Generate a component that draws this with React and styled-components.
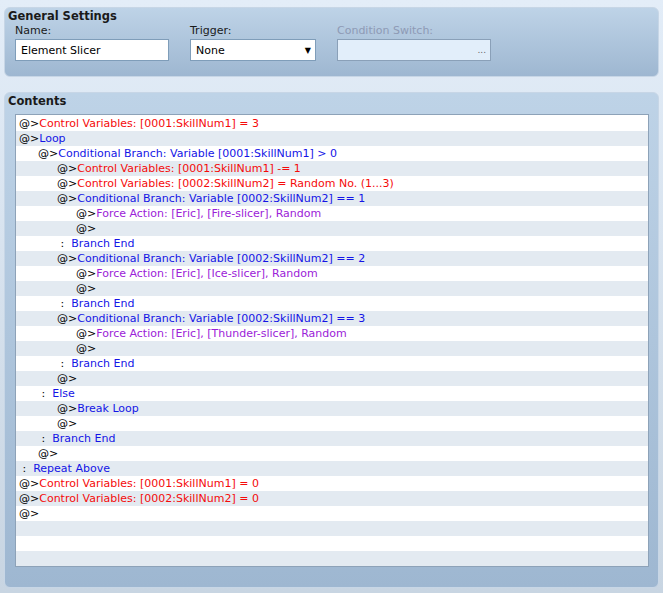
import React from "react";
import styled, { createGlobalStyle } from "styled-components";

const G = createGlobalStyle`
  body{margin:0;background:#dde8f4;font-family:"DejaVu Sans",Verdana,sans-serif;font-size:11px;}
`;
const Page = styled.div`width:663px;height:593px;padding:7px 4px 0 4px;box-sizing:border-box;display:flex;flex-direction:column;gap:15px;background:linear-gradient(#e3edf8,#c8d5e2);`;
const Panel = styled.div`border-radius:6px;background:linear-gradient(#bed3e7,#9eb7d1);border:1px solid #c7d6e6;display:flex;flex-direction:column;padding:1px 9px 0 3px;box-sizing:border-box;height:${p=>p.h}px;`;
const Title = styled.div`font-weight:bold;font-size:11.5px;color:#1a1a1a;height:15px;`;
const Fields = styled.div`display:flex;gap:21px;padding-left:7px;`;
const Field = styled.div`display:flex;flex-direction:column;gap:2px;color:${p=>p.dis?"#8e9ab5":"#1a1a1a"};`;
const Box = styled.div`width:${p=>p.w}px;height:22px;box-sizing:border-box;border:1px solid ${p=>p.dis?"#8aa0b8":"#7f9db9"};background:${p=>p.dis?"#e2eefa":"#fff"};display:flex;align-items:center;justify-content:space-between;padding:0 4px 0 5px;color:#000;font-size:11px;`;
const List = styled.div`margin:5px 0 0 7px;background:#fff;border:1px solid #8da2b8;height:453px;box-sizing:border-box;padding-top:1px;`;
const Row = styled.div`height:15px;line-height:15px;white-space:pre;padding-left:${p=>3+p.l*19}px;background:${p=>p.alt?"#e3eaf1":"#fff"};color:#000;`;
const C = styled.span`color:${p=>p.c};`;

const cols={r:"#f50a0a",b:"#1414e6",p:"#9b22d8"};
const rows=[
 [0,"@",">","r","Control Variables: [0001:SkillNum1] = 3"],
 [0,"@",">","b","Loop"],
 [1,"@",">","b","Conditional Branch: Variable [0001:SkillNum1] > 0"],
 [2,"@",">","r","Control Variables: [0001:SkillNum1] -= 1"],
 [2,"@",">","r","Control Variables: [0002:SkillNum2] = Random No. (1...3)"],
 [2,"@",">","b","Conditional Branch: Variable [0002:SkillNum2] == 1"],
 [3,"@",">","p","Force Action: [Eric], [Fire-slicer], Random"],
 [3,"@",">"],
 [2,":","b","Branch End"],
 [2,"@",">","b","Conditional Branch: Variable [0002:SkillNum2] == 2"],
 [3,"@",">","p","Force Action: [Eric], [Ice-slicer], Random"],
 [3,"@",">"],
 [2,":","b","Branch End"],
 [2,"@",">","b","Conditional Branch: Variable [0002:SkillNum2] == 3"],
 [3,"@",">","p","Force Action: [Eric], [Thunder-slicer], Random"],
 [3,"@",">"],
 [2,":","b","Branch End"],
 [2,"@",">"],
 [1,":","b","Else"],
 [2,"@",">","b","Break Loop"],
 [2,"@",">"],
 [1,":","b","Branch End"],
 [1,"@",">"],
 [0,":","b","Repeat Above"],
 [0,"@",">","r","Control Variables: [0001:SkillNum1] = 0"],
 [0,"@",">","r","Control Variables: [0002:SkillNum2] = 0"],
 [0,"@",">"],
 null,null,null
];

export default function App(){
  return <><G/><Page>
    <Panel h={70}>
      <Title>General Settings</Title>
      <Fields>
        <Field>Name:<Box w={154}>Element Slicer</Box></Field>
        <Field>Trigger:<Box w={126}>None<span style={{fontSize:8}}>▼</span></Box></Field>
        <Field dis>Condition Switch:<Box w={154} dis><span/><span style={{color:"#666",fontSize:9}}>...</span></Box></Field>
      </Fields>
    </Panel>
    <Panel h={496}>
      <Title>Contents</Title>
      <List>
        {rows.map((r,i)=>{
          if(!r) return <Row key={i} l={0} alt={i%2===1}> </Row>;
          if(r[1]===":") return <Row key={i} l={r[0]} alt={i%2===1}>{" :  "}<C c={cols[r[2]]}>{r[3]}</C></Row>;
          return <Row key={i} l={r[0]} alt={i%2===1}>@&gt;{r[3]&&<C c={cols[r[3]]}>{r[4]}</C>}</Row>;
        })}
      </List>
    </Panel>
  </Page></>;
}
